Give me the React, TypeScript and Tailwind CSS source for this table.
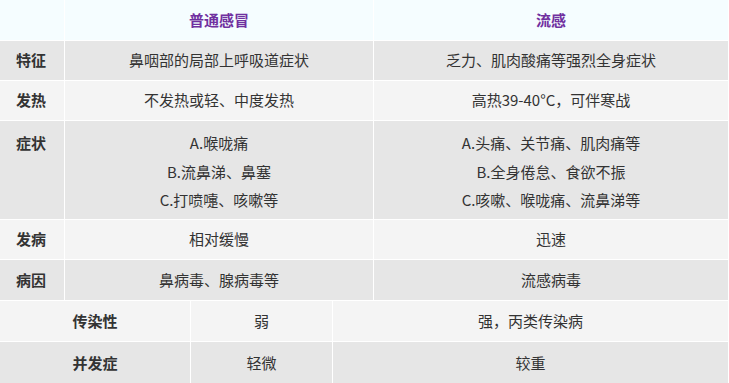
import React from "react";

const font = { fontFamily: '"Noto Sans CJK SC", "Noto Sans", sans-serif' };

type Row = { label: string; a: string[]; b: string[]; h: string; bg: string; top?: boolean };

const rows: Row[] = [
  { label: "特征", a: ["鼻咽部的局部上呼吸道症状"], b: ["乏力、肌肉酸痛等强烈全身症状"], h: "h-[39px]", bg: "bg-[#e6e6e6]" },
  { label: "发热", a: ["不发热或轻、中度发热"], b: ["高热39-40°C，可伴寒战"], h: "h-[39px]", bg: "bg-[#f4f4f4]" },
  {
    label: "症状",
    a: ["A.喉咙痛", "B.流鼻涕、鼻塞", "C.打喷嚏、咳嗽等"],
    b: ["A.头痛、关节痛、肌肉痛等", "B.全身倦怠、食欲不振", "C.咳嗽、喉咙痛、流鼻涕等"],
    h: "h-[98px]",
    bg: "bg-[#e6e6e6]",
    top: true,
  },
  { label: "发病", a: ["相对缓慢"], b: ["迅速"], h: "h-[39px]", bg: "bg-[#f4f4f4]" },
  { label: "病因", a: ["鼻病毒、腺病毒等"], b: ["流感病毒"], h: "h-[40px]", bg: "bg-[#e6e6e6]" },
];

export default function App() {
  return (
    <div className="w-[729px] h-[383px] overflow-hidden bg-white text-[15px] text-[#333333]" style={font}>
      <div className="grid grid-cols-[64px_308px_1fr] gap-px pr-px">
        <div className="h-[40px] bg-[#f5fdff]" />
        <div className="h-[40px] bg-[#f5fdff] flex items-center justify-center font-bold text-[#7030a0]">普通感冒</div>
        <div className="h-[40px] bg-[#f5fdff] flex items-center justify-center font-bold text-[#7030a0]">流感</div>
        {rows.map((r) => (
          <React.Fragment key={r.label}>
            <div className={`${r.h} ${r.bg} pl-4 font-bold flex ${r.top ? "items-start pt-[8px] leading-[28.5px]" : "items-center"}`}>
              {r.label}
            </div>
            <div className={`${r.h} ${r.bg} flex flex-col ${r.top ? "justify-start pt-[8px] leading-[28.5px]" : "justify-center"} items-center`}>
              {r.a.map((t) => (
                <div key={t}>{t}</div>
              ))}
            </div>
            <div className={`${r.h} ${r.bg} flex flex-col ${r.top ? "justify-start pt-[8px] leading-[28.5px]" : "justify-center"} items-center`}>
              {r.b.map((t) => (
                <div key={t}>{t}</div>
              ))}
            </div>
          </React.Fragment>
        ))}
      </div>
      <div className="grid grid-cols-[190px_141px_1fr] gap-px mt-px pr-px">
        <div className="h-[40px] bg-[#f4f4f4] flex items-center justify-center font-bold">传染性</div>
        <div className="h-[40px] bg-[#f4f4f4] flex items-center justify-center">弱</div>
        <div className="h-[40px] bg-[#f4f4f4] flex items-center justify-center">强，丙类传染病</div>
        <div className="h-[42px] bg-[#e6e6e6] flex items-center justify-center font-bold">并发症</div>
        <div className="h-[42px] bg-[#e6e6e6] flex items-center justify-center">轻微</div>
        <div className="h-[42px] bg-[#e6e6e6] flex items-center justify-center">较重</div>
      </div>
    </div>
  );
}
